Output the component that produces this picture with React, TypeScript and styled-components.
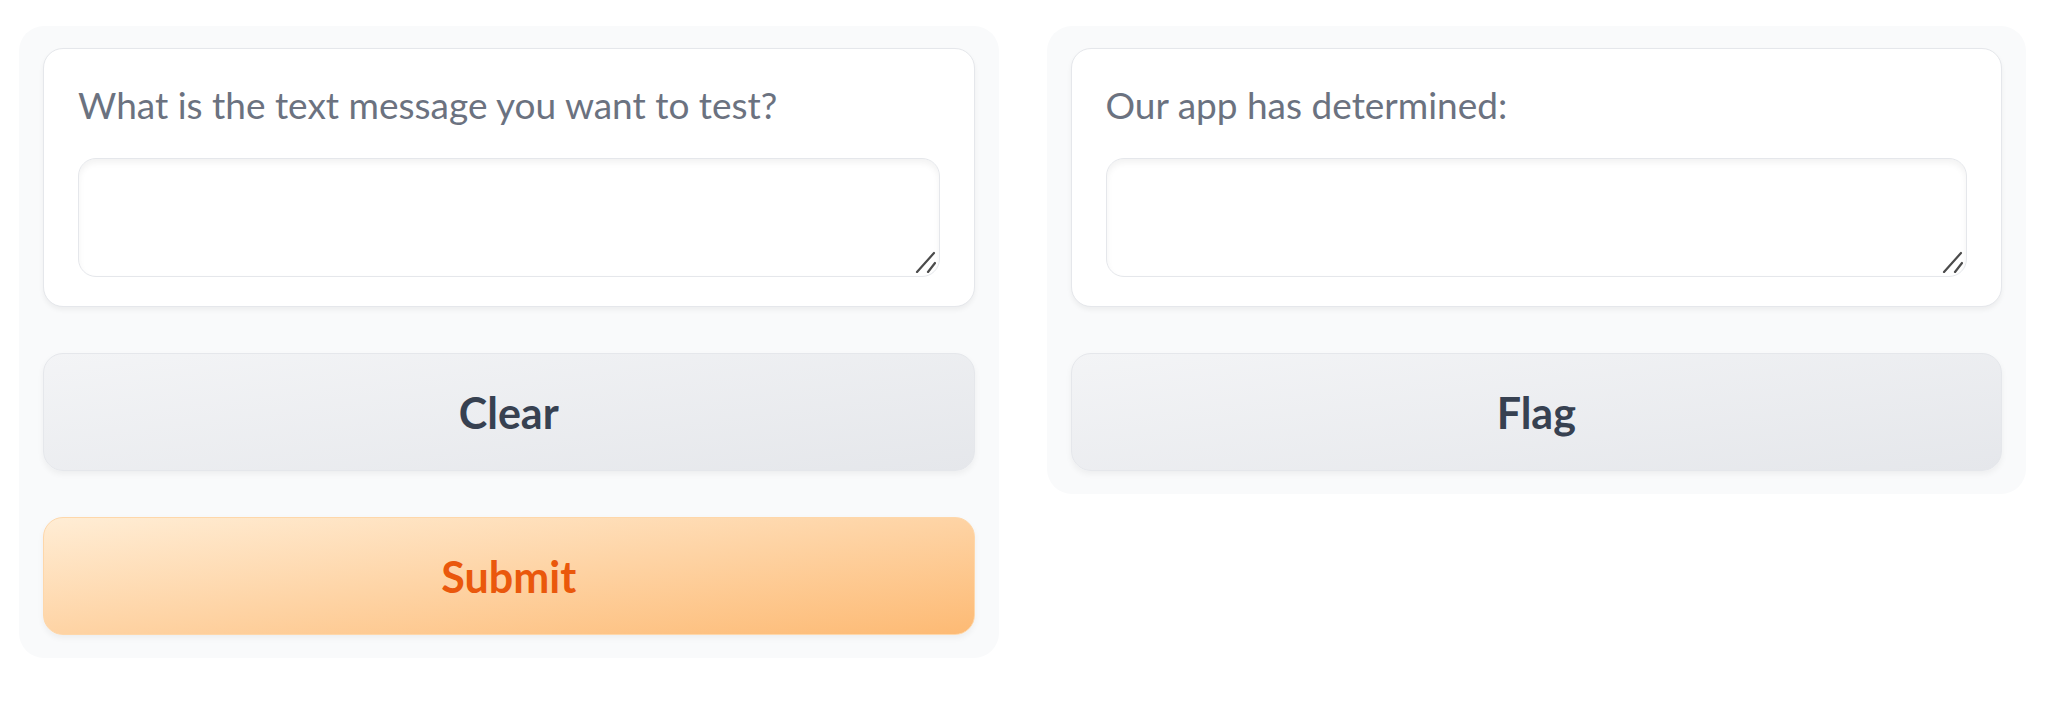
import React from "react";
import styled, { createGlobalStyle } from "styled-components";

const GlobalStyle = createGlobalStyle`
  html, body {
    margin: 0;
    padding: 0;
    background: #ffffff;
    font-family: Lato, "Open Sans", sans-serif;
  }
`;

const Page = styled.div`
  display: flex;
  align-items: flex-start;
  gap: 48px;
  padding: 26px 39px 0 19px;
`;

const Panel = styled.div`
  flex: 1 1 0;
  min-width: 0;
  display: flex;
  flex-direction: column;
  gap: 46px;
  padding: 22px 24px 23px;
  background: #f9fafb;
  border-radius: 25px;
`;

const Card = styled.label`
  display: flex;
  flex-direction: column;
  gap: 26px;
  padding: 29px 34px;
  background: #ffffff;
  border: 1px solid #e5e7eb;
  border-radius: 20px;
  box-shadow: 0 3px 5px rgba(0, 0, 0, 0.05);
`;

const Title = styled.span`
  font-family: Lato, "Open Sans", sans-serif;
  font-size: 37px;
  line-height: 54px;
  color: #6b7280;
`;

const Field = styled.div`
  position: relative;
`;

const TextArea = styled.textarea`
  display: block;
  box-sizing: border-box;
  width: 100%;
  height: 119px;
  margin: 0;
  padding: 16px 20px;
  font-family: Lato, sans-serif;
  font-size: 36px;
  color: #1f2937;
  background: #ffffff;
  border: 1px solid #e5e7eb;
  border-radius: 18px;
  box-shadow: inset 0 4px 6px rgba(0, 0, 0, 0.05);
  outline: none;
  resize: none;
`;

const Grip = styled.svg`
  position: absolute;
  right: 4px;
  bottom: 4px;
  width: 22px;
  height: 22px;
  pointer-events: none;
`;

const Button = styled.button<{ $primary?: boolean }>`
  display: flex;
  align-items: center;
  justify-content: center;
  box-sizing: border-box;
  width: 100%;
  height: 118px;
  margin: 0;
  padding: 0;
  font-family: Lato, "Open Sans", sans-serif;
  font-weight: 700;
  font-size: 43px;
  border-radius: 20px;
  cursor: pointer;
  box-shadow: 0 3px 6px rgba(0, 0, 0, 0.05);
  color: ${(p) => (p.$primary ? "#ea580c" : "#374151")};
  border: 1px solid ${(p) => (p.$primary ? "#fed7aa" : "#e5e7eb")};
  background: ${(p) =>
    p.$primary
      ? "linear-gradient(to bottom right, #ffedd5, #fdba74)"
      : "linear-gradient(to bottom right, #f3f4f6, #e5e7eb)"};
`;

function TextBox() {
  return (
    <Field>
      <TextArea rows={1} />
      <Grip viewBox="0 0 22 22" aria-hidden="true">
        <g stroke="#4b4b4b" strokeWidth="2.2" strokeLinecap="round">
          <line x1="20" y1="2" x2="3" y2="21" />
          <line x1="21" y1="12" x2="14" y2="21" />
        </g>
      </Grip>
    </Field>
  );
}

export default function App() {
  return (
    <>
      <GlobalStyle />
      <Page>
        <Panel>
          <Card>
            <Title>What is the text message you want to test?</Title>
            <TextBox />
          </Card>
          <Button>Clear</Button>
          <Button $primary>Submit</Button>
        </Panel>
        <Panel>
          <Card>
            <Title>Our app has determined:</Title>
            <TextBox />
          </Card>
          <Button>Flag</Button>
        </Panel>
      </Page>
    </>
  );
}
